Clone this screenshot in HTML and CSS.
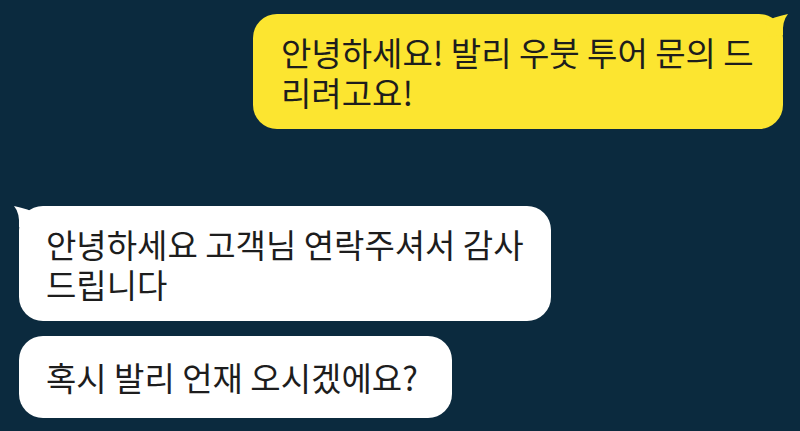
FILE: index.html
```html
<html>
<head>
<meta charset="utf-8">
<link rel="stylesheet" href="styles.css">
<title>채팅</title>
</head>
<body>
<div class="chat">
  <div class="msg me">
    <div class="bubble yellow">안녕하세요! 발리 우붓 투어 문의 드<br>리려고요!</div>
    <svg class="tail tail-right" width="30" height="30" viewBox="0 0 30 30"><path d="M6 9 Q14 4 29 1 Q23 8 24 22 L10 24 Z" fill="#fce530"/></svg>
  </div>
  <div class="msg them first">
    <div class="bubble white">안녕하세요 고객님 연락주셔서 감사<br>드립니다</div>
    <svg class="tail tail-left" width="30" height="30" viewBox="0 0 30 30"><path d="M24 9 Q16 4 1 1 Q7 8 6 22 L20 24 Z" fill="#ffffff"/></svg>
  </div>
  <div class="msg them">
    <div class="bubble white single">혹시 발리 언재 오시겠에요?</div>
  </div>
</div>
</body>
</html>
```

FILE: styles.css
```css
body {
  margin: 0;
  background: #0b2a3e;
  font-family: "Noto Sans CJK KR", "Noto Sans", sans-serif;
}

.chat {
  display: flex;
  flex-direction: column;
  padding: 14px 17px 0 19px;
}

.msg { position: relative; }
.msg.me { align-self: flex-end; }
.msg.them { align-self: flex-start; margin-top: 15px; }
.msg.them.first { margin-top: 77px; }

.bubble {
  font-size: 33px;
  line-height: 40px;
  color: #1d1d1d;
  padding: 18px 27px 17px 27px;
  border-radius: 24px;
  white-space: nowrap;
}
.bubble.yellow { background: #fce530; width: 479px; padding-left: 28px; padding-right: 23px; }
.bubble.white { background: #ffffff; }
.bubble.single { padding: 21px 34px 21px 27px; }

.tail { position: absolute; top: 0; }
.tail-right { right: -6px; top: -1px; }
.tail-left { left: -6px; top: -1px; }
```
